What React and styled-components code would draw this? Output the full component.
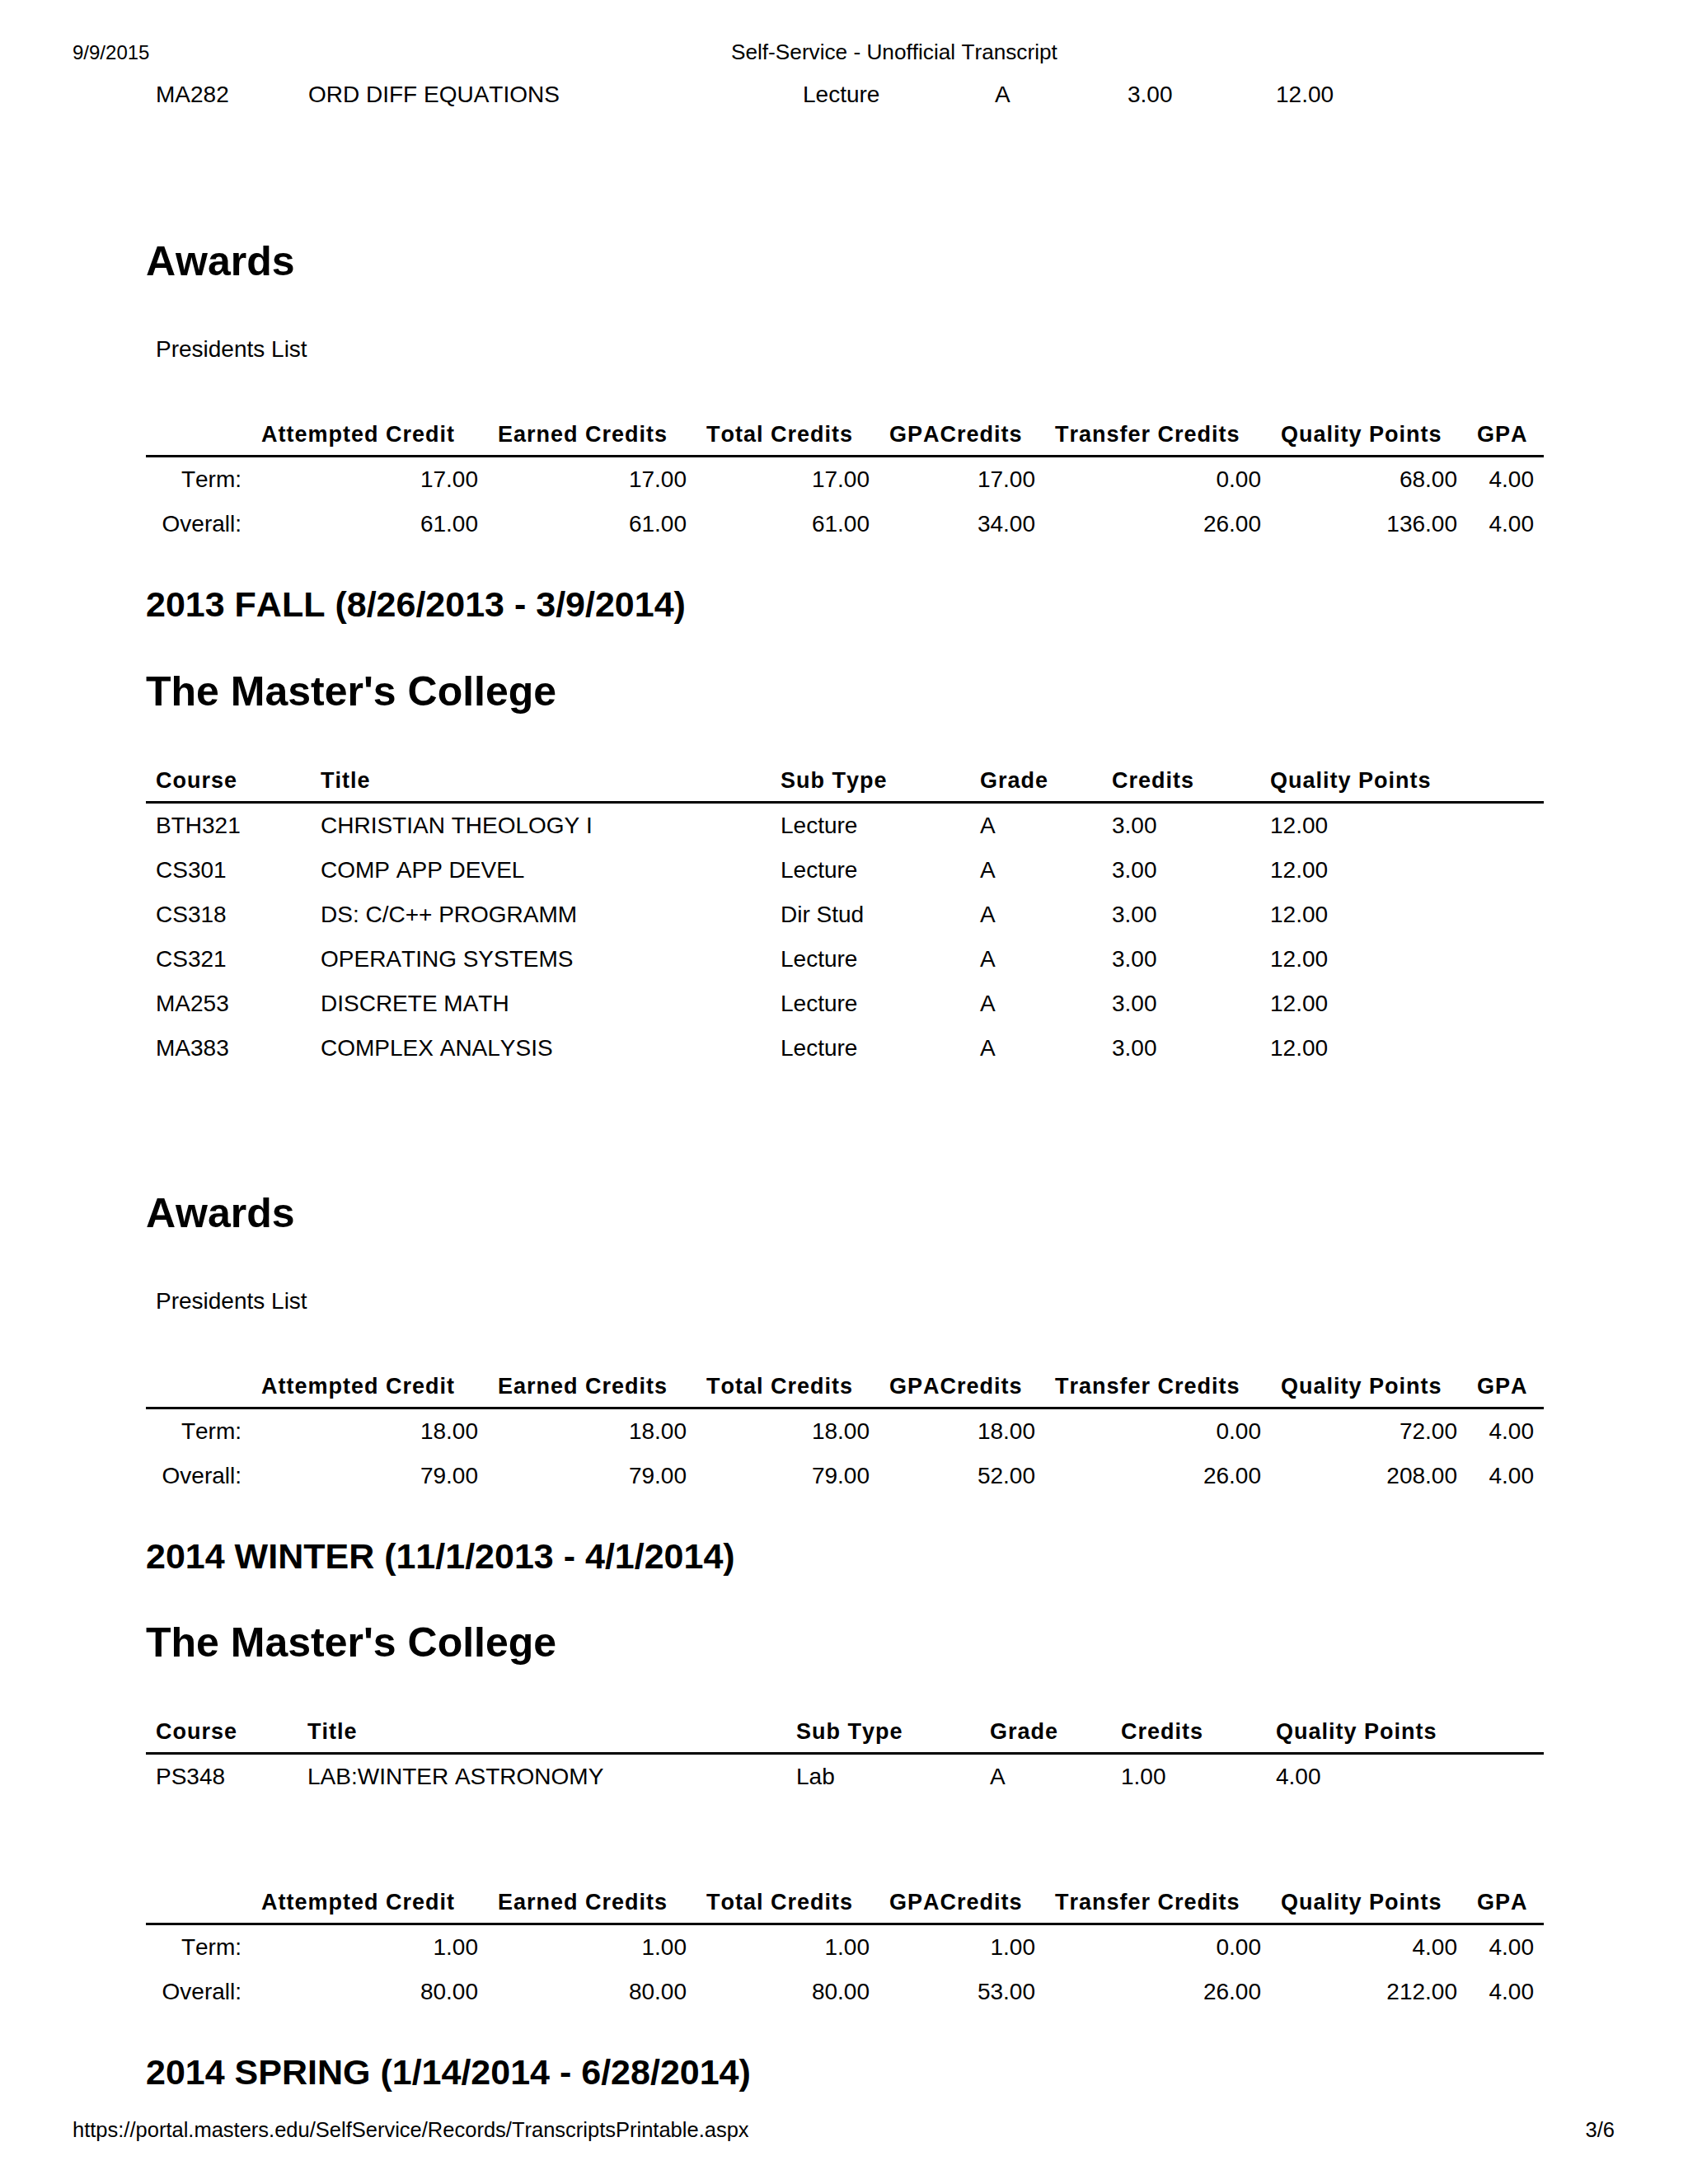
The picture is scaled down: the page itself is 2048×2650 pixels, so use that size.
import React from "react";
import styled, { createGlobalStyle } from "styled-components";

const GlobalStyle = createGlobalStyle`
  html, body { margin: 0; padding: 0; background: #ffffff; }
  body {
    font-family: "Liberation Sans", Arial, Helvetica, sans-serif;
    color: #000000;
    font-kerning: none;
  }
`;

const Page = styled.div`
  width: 2048px;
  min-height: 2650px;
  display: flex;
  flex-direction: column;
  background: #ffffff;
`;

const PrintBar = styled.div`
  display: grid;
  grid-template-columns: ${(p) => p.$cols || "1fr auto"};
  align-items: baseline;
  padding: 0 89px 0 88px;
  font-size: 25.5px;
  line-height: 40px;
  white-space: nowrap;
  ${(p) => (p.$top ? "padding-top: 43px;" : "margin-top: auto; padding-bottom: 46px;")}
`;

const BarText = styled.span`
  font-size: ${(p) => p.$size || 25.5}px;
`;

const Content = styled.main`
  padding: 0 175px 0 177px;
  display: flex;
  flex-direction: column;
`;

const Table = styled.div`
  display: grid;
  grid-template-columns: ${(p) => p.$cols};
  margin-top: ${(p) => p.$mt || 0}px;
  font-size: 28px;
`;

const HeadCell = styled.div`
  font-weight: 700;
  font-size: 27px;
  letter-spacing: 1px;
  line-height: 40px;
  padding: 0 12px 5px;
  border-bottom: 3px solid #000;
  white-space: nowrap;
  text-align: left;
`;

const Cell = styled.div`
  font-size: 28px;
  line-height: 54px;
  padding: 0 12px;
  white-space: nowrap;
  text-align: ${(p) => p.$align || "left"};
`;

const Heading2 = styled.h2`
  margin: ${(p) => p.$mt}px 0 0;
  font-size: 50px;
  font-weight: 700;
  line-height: 60px;
`;

const Heading3 = styled.h3`
  margin: ${(p) => p.$mt}px 0 0;
  font-size: 43px;
  font-weight: 700;
  line-height: 52px;
`;

const AwardText = styled.div`
  margin-top: 57px;
  padding-left: 12px;
  font-size: 28px;
  line-height: 40px;
`;

const SUMMARY_COLS = "128px 287px 253px 222px 201px 274px 238px 93px";
const SUMMARY_HEAD = [
  "",
  "Attempted Credit",
  "Earned Credits",
  "Total Credits",
  "GPACredits",
  "Transfer Credits",
  "Quality Points",
  "GPA",
];
const COURSE_HEAD = ["Course", "Title", "Sub Type", "Grade", "Credits", "Quality Points"];

function Summary({ term, overall, mt }) {
  return (
    <Table $cols={SUMMARY_COLS} $mt={mt}>
      {SUMMARY_HEAD.map((h, i) => (
        <HeadCell key={"h" + i}>{h}</HeadCell>
      ))}
      {[
        ["Term:", ...term],
        ["Overall:", ...overall],
      ].map((row, r) =>
        row.map((v, i) => (
          <Cell key={r + "-" + i} $align="right">
            {v}
          </Cell>
        ))
      )}
    </Table>
  );
}

function Courses({ cols, rows, mt, head = true }) {
  return (
    <Table $cols={cols} $mt={mt}>
      {head && COURSE_HEAD.map((h) => <HeadCell key={h}>{h}</HeadCell>)}
      {rows.map((row, r) => row.map((v, i) => <Cell key={r + "-" + i}>{v}</Cell>))}
    </Table>
  );
}

function Awards({ mt = 143 }) {
  return (
    <>
      <Heading2 $mt={mt}>Awards</Heading2>
      <AwardText>Presidents List</AwardText>
    </>
  );
}

const FALL_ROWS = [
  ["BTH321", "CHRISTIAN THEOLOGY I", "Lecture", "A", "3.00", "12.00"],
  ["CS301", "COMP APP DEVEL", "Lecture", "A", "3.00", "12.00"],
  ["CS318", "DS: C/C++ PROGRAMM", "Dir Stud", "A", "3.00", "12.00"],
  ["CS321", "OPERATING SYSTEMS", "Lecture", "A", "3.00", "12.00"],
  ["MA253", "DISCRETE MATH", "Lecture", "A", "3.00", "12.00"],
  ["MA383", "COMPLEX ANALYSIS", "Lecture", "A", "3.00", "12.00"],
];

export default function App() {
  return (
    <>
      <GlobalStyle />
      <Page>
        <PrintBar $top $cols="799px auto">
          <BarText $size={24}>9/9/2015</BarText>
          <BarText $size={26.2}>Self-Service - Unofficial Transcript</BarText>
        </PrintBar>
        <Content>
          <Courses
            head={false}
            mt={4}
            cols="185px 600px 233px 161px 180px 337px"
            rows={[["MA282", "ORD DIFF EQUATIONS", "Lecture", "A", "3.00", "12.00"]]}
          />
          <Awards mt={145} />
          <Summary
            mt={63}
            term={["17.00", "17.00", "17.00", "17.00", "0.00", "68.00", "4.00"]}
            overall={["61.00", "61.00", "61.00", "34.00", "26.00", "136.00", "4.00"]}
          />
          <Heading3 $mt={44}>2013 FALL (8/26/2013 - 3/9/2014)</Heading3>
          <Heading2 $mt={49.5}>The Master's College</Heading2>
          <Courses mt={58} cols="200px 558px 242px 160px 192px 344px" rows={FALL_ROWS} />
          <Awards />
          <Summary
            mt={63}
            term={["18.00", "18.00", "18.00", "18.00", "0.00", "72.00", "4.00"]}
            overall={["79.00", "79.00", "79.00", "52.00", "26.00", "208.00", "4.00"]}
          />
          <Heading3 $mt={44}>2014 WINTER (11/1/2013 - 4/1/2014)</Heading3>
          <Heading2 $mt={49.5}>The Master's College</Heading2>
          <Courses
            mt={58}
            cols="184px 593px 235px 159px 188px 337px"
            rows={[["PS348", "LAB:WINTER ASTRONOMY", "Lab", "A", "1.00", "4.00"]]}
          />
          <Summary
            mt={105}
            term={["1.00", "1.00", "1.00", "1.00", "0.00", "4.00", "4.00"]}
            overall={["80.00", "80.00", "80.00", "53.00", "26.00", "212.00", "4.00"]}
          />
          <Heading3 $mt={44}>2014 SPRING (1/14/2014 - 6/28/2014)</Heading3>
        </Content>
        <PrintBar $cols="1fr auto">
          <BarText>https://portal.masters.edu/SelfService/Records/TranscriptsPrintable.aspx</BarText>
          <BarText>3/6</BarText>
        </PrintBar>
      </Page>
    </>
  );
}
